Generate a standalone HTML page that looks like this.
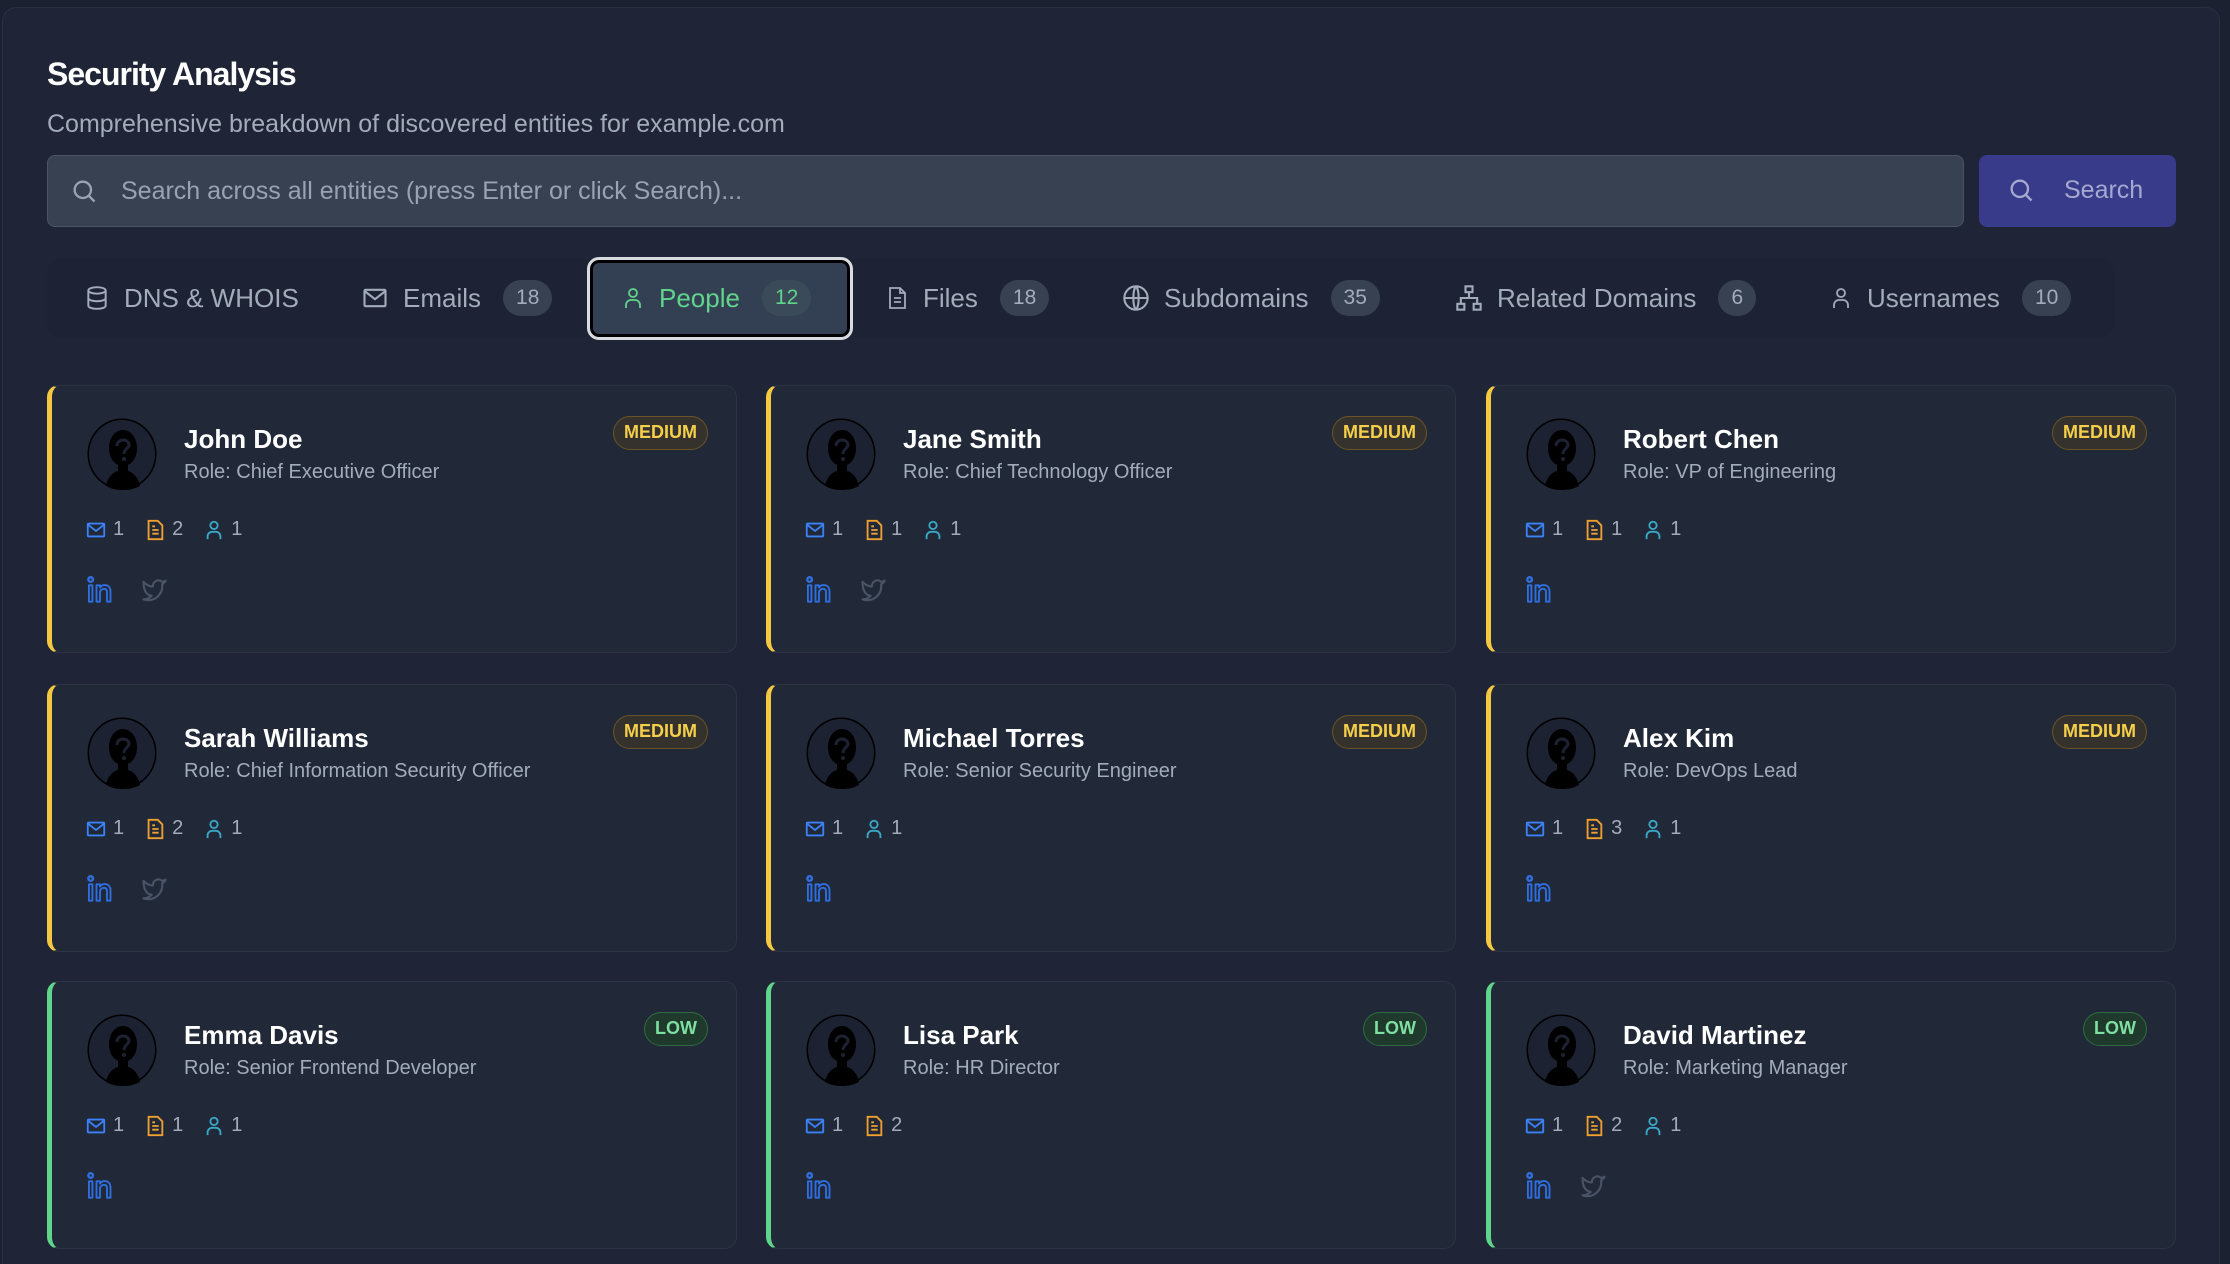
<!DOCTYPE html>
<html style="overflow:hidden;height:1264px"><head><meta charset="utf-8"><style>
*{box-sizing:border-box;margin:0;padding:0}
body{width:2230px;height:1264px;background:#1b2130;font-family:"Liberation Sans",sans-serif;overflow:hidden;position:relative}
.panel{position:absolute;left:2px;top:7px;width:2218px;height:1257px;background:#1f2536;border:1px solid #283044;border-bottom:none;border-radius:14px 14px 0 0}
.title{position:absolute;left:47px;top:56px;font-size:32px;font-weight:bold;color:#fff;letter-spacing:-1px}
.sub{position:absolute;left:47px;top:110px;font-size:25px;color:#a3acbb}
.search{position:absolute;left:47px;top:155px;width:1917px;height:72px;background:#374152;border:1px solid #4a5466;border-radius:8px}
.search span{position:absolute;left:73px;top:21px;font-size:25px;color:#98a2b3}
.search svg{position:absolute;left:22px;top:21px}
.btn{position:absolute;left:1979px;top:155px;width:197px;height:72px;background:#383a8a;border-radius:8px}
.btn span{position:absolute;left:85px;top:21px;font-size:25px;color:#a5a9d0}
.btn svg{position:absolute;left:28px;top:21px}
.tabs{position:absolute;left:47px;top:259px;width:2068px;height:78px;background:#1d2334;border-radius:14px}
.tab{position:absolute;top:0;height:78px;display:flex;align-items:center;font-size:26px;color:#a3acbb}
.tab svg{margin-right:14px}
.cnt{display:inline-block;margin-left:22px;background:#374152;border-radius:20px;height:36px;line-height:36px;padding:0 13px;font-size:21px;color:#a3acbb}
.sel{position:absolute;left:587px;top:257px;width:266px;height:83px;border:3px solid #d8dbe0;border-radius:12px;box-shadow:inset 0 0 0 3px #000;background:#334054}
.card{position:absolute;width:690px;height:268px;background:#212838;border:1px solid #2b3345;border-radius:12px;border-left:5px solid #f5c842}
.card.low{border-left-color:#5fd48a}
.av{position:absolute;left:34px;top:32px}
.nm{position:absolute;left:132px;top:38px;font-size:26px;font-weight:bold;color:#fff}
.rl{position:absolute;left:132px;top:75px;font-size:20px;color:#a3acbb}
.bd{position:absolute;right:28px;top:30px;height:34px;line-height:31px;padding:0 10px;border-radius:18px;font-size:18px;font-weight:bold;border:1.5px solid #6b5524;background:#35322e;color:#f5cf4a}
.low .bd{border-color:#2f6b40;background:#1f3a2c;color:#7ee0a0}
.st{position:absolute;left:33px;top:132px;display:flex;align-items:center;font-size:20px;color:#a3acbb}
.st svg{margin-right:6px}.st b{font-weight:normal;margin-right:20px}
.so{position:absolute;left:34px;top:190px;display:flex;gap:26px}
</style></head><body>
<div class="panel"></div>
<div class="title">Security Analysis</div>
<div class="sub">Comprehensive breakdown of discovered entities for example.com</div>
<div class="search"><svg width="28" height="28" viewBox="0 0 24 24" fill="none" stroke="#98a2b3" stroke-width="2"><circle cx="11" cy="11" r="7"/><path d="M16 16l5 5"/></svg><span>Search across all entities (press Enter or click Search)...</span></div>
<div class="btn"><svg width="28" height="28" viewBox="0 0 24 24" fill="none" stroke="#a5a9d0" stroke-width="2"><circle cx="11" cy="11" r="7"/><path d="M16 16l5 5"/></svg><span>Search</span></div>
<div class="tabs"></div>
<div class="sel"></div>
<div class="tab" style="left:84px;top:259px"><svg width="26" height="30" viewBox="0 0 24 24" fill="none" stroke="#a3acbb" stroke-width="1.8"><ellipse cx="12" cy="5" rx="8" ry="3"/><path d="M4 5v14c0 1.7 3.6 3 8 3s8-1.3 8-3V5M4 12c0 1.7 3.6 3 8 3s8-1.3 8-3"/></svg>DNS &amp; WHOIS</div>
<div class="tab" style="left:361px;top:259px"><svg width="28" height="28" viewBox="0 0 24 24" fill="none" stroke="#a3acbb" stroke-width="1.8"><rect x="3" y="5" width="18" height="14" rx="1"/><path d="M3 6l9 7 9-7"/></svg>Emails<span class="cnt">18</span></div>
<div class="tab" style="left:621px;top:259px;color:#5fd48a"><svg width="24" height="28" viewBox="0 0 24 24" fill="none" stroke="#5fd48a" stroke-width="1.8"><circle cx="12" cy="7" r="4"/><path d="M5 22v-3a5 5 0 0 1 5-5h4a5 5 0 0 1 5 5v3"/></svg>People<span class="cnt" style="color:#5fd48a;background:#3a4a58">12</span></div>
<div class="tab" style="left:885px;top:259px"><svg width="24" height="30" viewBox="0 0 24 24" fill="none" stroke="#a3acbb" stroke-width="1.8"><path d="M5 2h10l5 5v15H5z"/><path d="M15 2v5h5M9 12h7M9 16h7"/></svg>Files<span class="cnt">18</span></div>
<div class="tab" style="left:1122px;top:259px"><svg width="28" height="28" viewBox="0 0 24 24" fill="none" stroke="#a3acbb" stroke-width="1.8"><circle cx="12" cy="12" r="10"/><path d="M2 12h20M12 2c3 3 3 17 0 20M12 2c-3 3-3 17 0 20"/></svg>Subdomains<span class="cnt">35</span></div>
<div class="tab" style="left:1455px;top:259px"><svg width="28" height="30" viewBox="0 0 24 24" fill="none" stroke="#a3acbb" stroke-width="1.8"><rect x="9" y="2" width="6" height="5"/><rect x="2" y="17" width="6" height="5"/><rect x="16" y="17" width="6" height="5"/><path d="M12 7v5M5 17v-5h14v5"/></svg>Related Domains<span class="cnt">6</span></div>
<div class="tab" style="left:1829px;top:259px"><svg width="24" height="30" viewBox="0 0 24 24" fill="none" stroke="#a3acbb" stroke-width="1.8"><circle cx="12" cy="7" r="4"/><path d="M5 22v-3a5 5 0 0 1 5-5h4a5 5 0 0 1 5 5v3"/></svg>Usernames<span class="cnt">10</span></div>

<svg width="0" height="0" style="position:absolute"><defs>
<symbol id="av" viewBox="0 0 72 72"><ellipse cx="36" cy="36" rx="34" ry="35" fill="#000" stroke="#000" stroke-width="1"/><ellipse cx="36" cy="36" rx="33" ry="34" fill="#1c2232"/><path d="M20 68c2-10 8-14 12-15v-6c-6-3-9-9-9-17 0-10 6-18 14-18s14 8 14 18c0 8-3 14-9 17v6c4 1 10 5 12 15c-6 3-10 4-17 4s-11-1-17-4z" fill="#000"/><path d="M31 28c0-4 3-6 6-6s6 2 6 5-5 4-5 9" stroke="#1c2232" stroke-width="3" fill="none"/><circle cx="38" cy="41" r="2" fill="#1c2232"/></symbol>
<symbol id="ml" viewBox="0 0 24 24"><rect x="3" y="5" width="18" height="14" rx="1" fill="none" stroke="#3b82f6" stroke-width="2"/><path d="M3 6l9 7 9-7" fill="none" stroke="#3b82f6" stroke-width="2"/></symbol>
<symbol id="fl" viewBox="0 0 24 24"><path d="M5 2h10l5 5v15H5z M9 12h7M9 16h7M9 8h3" fill="none" stroke="#f0a030" stroke-width="2"/></symbol>
<symbol id="us" viewBox="0 0 24 24"><circle cx="12" cy="7" r="4" fill="none" stroke="#3aa8c8" stroke-width="2"/><path d="M5 22v-3a5 5 0 0 1 5-5h4a5 5 0 0 1 5 5v3" fill="none" stroke="#3aa8c8" stroke-width="2"/></symbol>
<symbol id="li" viewBox="0 0 24 24"><circle cx="4" cy="3" r="2" fill="none" stroke="#2f6fe0" stroke-width="2"/><path d="M2.5 8h3v14h-3zM9 8h3v2c1-1.5 2.5-2.2 4-2.2 3 0 5 2 5 5.5V22h-3v-8c0-2-1-3-2.5-3S12 12 12 14v8H9z" fill="none" stroke="#2f6fe0" stroke-width="1.6" stroke-linejoin="round"/></symbol>
<symbol id="tw" viewBox="0 0 24 24"><path d="M22 4s-1 2-3 3c1 9-7 16-16 13 3 0 5-1 7-3-6-1-7-7-7-12 2 2 5 4 8 4 0-4 4-7 8-4 1 0 3-1 3-1z" fill="none" stroke="#4a5466" stroke-width="1.8" stroke-linejoin="round"/></symbol>
</defs></svg>

<div id="cards"></div>
<script>
const d=[["John Doe","Chief Executive Officer","m",[1,2,1],1],["Jane Smith","Chief Technology Officer","m",[1,1,1],1],["Robert Chen","VP of Engineering","m",[1,1,1],0],
["Sarah Williams","Chief Information Security Officer","m",[1,2,1],1],["Michael Torres","Senior Security Engineer","m",[1,null,1],0],["Alex Kim","DevOps Lead","m",[1,3,1],0],
["Emma Davis","Senior Frontend Developer","l",[1,1,1],0],["Lisa Park","HR Director","l",[1,2,null],0],["David Martinez","Marketing Manager","l",[1,2,1],1]];
const xs=[47,766,1486],ys=[385,684,981];let h="";
d.forEach((c,i)=>{const x=xs[i%3],y=ys[Math.floor(i/3)];
let st="";const ic=["ml","fl","us"];c[3].forEach((v,j)=>{if(v!=null)st+=`<svg width="22" height="22"><use href="#${ic[j]}"/></svg><b>${v}</b>`});
h+=`<div class="card ${c[2]=="l"?"low":""}" style="left:${x}px;top:${y}px"><svg class="av" width="72" height="72"><use href="#av"/></svg><div class="nm">${c[0]}</div><div class="rl">Role: ${c[1]}</div><div class="bd">${c[2]=="l"?"LOW":"MEDIUM"}</div><div class="st">${st}</div><div class="so"><svg width="28" height="28"><use href="#li"/></svg>${c[4]?'<svg width="28" height="28"><use href="#tw"/></svg>':''}</div></div>`});
document.getElementById("cards").innerHTML=h;
</script>
</body></html>
